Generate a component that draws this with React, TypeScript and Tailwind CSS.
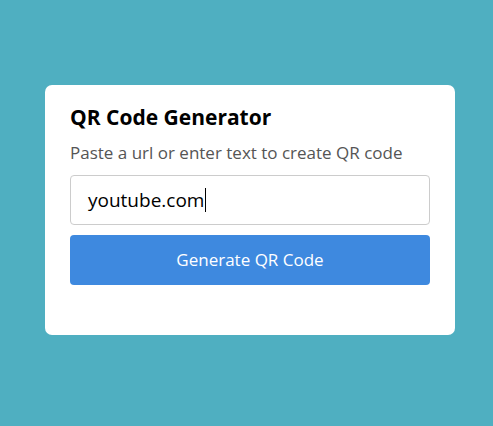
export default function App() {
  return (
    <div
      className="min-h-screen w-full bg-[#4fafc1] pt-[85px] pl-[45px]"
      style={{ fontFamily: '"Open Sans", "Noto Sans", sans-serif' }}
    >
      <div className="w-[410px] h-[250px] bg-white rounded-[7px] px-[25px] pt-[17px] flex flex-col">
        <h1 className="text-[21px] leading-[30px] font-bold text-black">QR Code Generator</h1>
        <p className="text-[17px] leading-[24px] text-[#555] mt-[9px]">
          Paste a url or enter text to create QR code
        </p>
        <div className="mt-[10px] h-[50px] border border-[#ccc] rounded-[4px] flex items-center pl-[17px] text-[19px] text-black">
          <span>youtube.com</span>
          <span className="w-px h-[24px] bg-black ml-px" />
        </div>
        <button className="mt-[10px] h-[50px] w-full rounded-[4px] bg-[#3e89df] text-white text-[17px]">
          Generate QR Code
        </button>
      </div>
    </div>
  );
}
